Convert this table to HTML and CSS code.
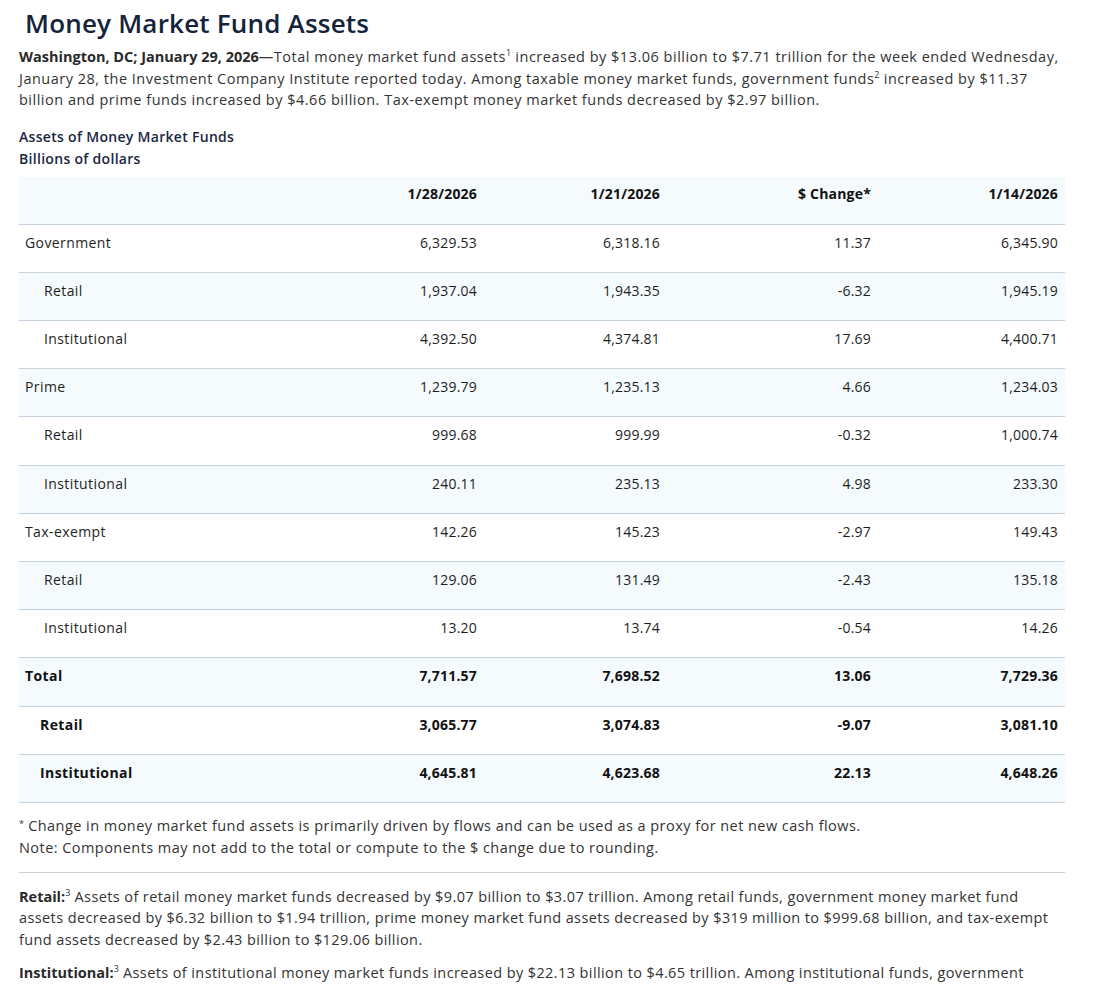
FILE: index.html
```html
<!DOCTYPE html>
<html lang="en">
<head>
<meta charset="utf-8">
<title>Money Market Fund Assets</title>
<link rel="stylesheet" href="styles.css">
</head>
<body>
<main class="page">
  <h1 class="title">Money Market Fund Assets</h1>
  <p class="lead"><strong>Washington, DC; January 29, 2026</strong>—Total money market fund assets<sup>1</sup> increased by $13.06 billion to $7.71 trillion for the week ended Wednesday, January 28, the Investment Company Institute reported today. Among taxable money market funds, government funds<sup>2</sup> increased by $11.37 billion and prime funds increased by $4.66 billion. Tax-exempt money market funds decreased by $2.97 billion.</p>

  <div class="caption">
    <div>Assets of Money Market Funds</div>
    <div>Billions of dollars</div>
  </div>

  <table class="data">
    <colgroup>
      <col>
      <col class="c1">
      <col class="c2">
      <col class="c3">
      <col class="c4">
    </colgroup>
    <thead>
      <tr><th></th><th>1/28/2026</th><th>1/21/2026</th><th>$ Change*</th><th>1/14/2026</th></tr>
    </thead>
    <tbody>
      <tr><td class="lbl">Government</td><td>6,329.53</td><td>6,318.16</td><td>11.37</td><td>6,345.90</td></tr>
      <tr><td class="lbl sub">Retail</td><td>1,937.04</td><td>1,943.35</td><td>-6.32</td><td>1,945.19</td></tr>
      <tr><td class="lbl sub">Institutional</td><td>4,392.50</td><td>4,374.81</td><td>17.69</td><td>4,400.71</td></tr>
      <tr><td class="lbl">Prime</td><td>1,239.79</td><td>1,235.13</td><td>4.66</td><td>1,234.03</td></tr>
      <tr><td class="lbl sub">Retail</td><td>999.68</td><td>999.99</td><td>-0.32</td><td>1,000.74</td></tr>
      <tr><td class="lbl sub">Institutional</td><td>240.11</td><td>235.13</td><td>4.98</td><td>233.30</td></tr>
      <tr><td class="lbl">Tax-exempt</td><td>142.26</td><td>145.23</td><td>-2.97</td><td>149.43</td></tr>
      <tr><td class="lbl sub">Retail</td><td>129.06</td><td>131.49</td><td>-2.43</td><td>135.18</td></tr>
      <tr><td class="lbl sub">Institutional</td><td>13.20</td><td>13.74</td><td>-0.54</td><td>14.26</td></tr>
      <tr class="bold"><td class="lbl">Total</td><td>7,711.57</td><td>7,698.52</td><td>13.06</td><td>7,729.36</td></tr>
      <tr class="bold"><td class="lbl subb">Retail</td><td>3,065.77</td><td>3,074.83</td><td>-9.07</td><td>3,081.10</td></tr>
      <tr class="bold"><td class="lbl subb">Institutional</td><td>4,645.81</td><td>4,623.68</td><td>22.13</td><td>4,648.26</td></tr>
    </tbody>
  </table>

  <div class="notes">
    <p><sup>*</sup> Change in money market fund assets is primarily driven by flows and can be used as a proxy for net new cash flows.</p>
    <p>Note: Components may not add to the total or compute to the $ change due to rounding.</p>
  </div>

  <hr class="rule">

  <p class="body"><strong>Retail:</strong><sup>3</sup> Assets of retail money market funds decreased by $9.07 billion to $3.07 trillion. Among retail funds, government money market fund assets decreased by $6.32 billion to $1.94 trillion, prime money market fund assets decreased by $319 million to $999.68 billion, and tax-exempt fund assets decreased by $2.43 billion to $129.06 billion.</p>
  <p class="body"><strong>Institutional:</strong><sup>3</sup> Assets of institutional money market funds increased by $22.13 billion to $4.65 trillion. Among institutional funds, government money market fund assets increased by $28.39 billion to $3.59 trillion, prime money market fund assets increased by $4.98 billion to $240.11 billion, and tax-exempt fund assets decreased by $0.54 billion to $13.20 billion.</p>
</main>
</body>
</html>
```

FILE: styles.css
```css
html, body {
  margin: 0;
  padding: 0;
  background: #ffffff;
}

body {
  font-family: "Open Sans", "Noto Sans", sans-serif;
  color: #333333;
  font-size: 14.5px;
}

.page {
  width: 1046px;
  padding: 0 0 0 19px;
}

.title {
  margin: 0;
  padding: 6px 0 0 6px;
  font-size: 26px;
  line-height: 34px;
  font-weight: 600;
  color: #14233c;
  letter-spacing: 0.2px;
}

.lead {
  margin: 6px 0 0;
  line-height: 21.5px;
  letter-spacing: 0.5px;
}

.lead strong, .body strong {
  font-weight: 700;
  color: #2a2a2a;
  letter-spacing: 0;
}

sup {
  font-size: 9px;
  line-height: 0;
  vertical-align: 6px;
  letter-spacing: 0;
}

.caption {
  margin-top: 15px;
  color: #1a2740;
  font-weight: 600;
  font-size: 14px;
  line-height: 22px;
  letter-spacing: 0.3px;
}

.data {
  width: 1046px;
  border-collapse: collapse;
  margin-top: 7px;
  color: #1e1e1e;
}

.data .c1 { width: 185px; }
.data .c2 { width: 183px; }
.data .c3 { width: 211px; }
.data .c4 { width: 187px; }

.data th,
.data td {
  text-align: right;
  padding: 6px 7px 20px;
  line-height: 21px;
  border-bottom: 1px solid #c6d3df;
  font-size: 14px;
  letter-spacing: 0.2px;
}

.data th {
  font-weight: 700;
  color: #111;
}

.data td {
  padding: 7px 7px 19px;
  line-height: 21.2px;
}

.data thead tr {
  background: #f5fafd;
}

.data tbody tr:nth-child(even) {
  background: #f5fafd;
}

.data td.lbl {
  text-align: left;
  padding-left: 6px;
  letter-spacing: 0.4px;
}

.data td.sub {
  padding-left: 25px;
}

.data td.subb {
  padding-left: 21px;
}

.data tr.bold td {
  font-weight: 700;
  color: #111;
}

.notes {
  margin-top: 12px;
  line-height: 22px;
  letter-spacing: 0.45px;
}

.notes p {
  margin: 0;
}

.notes sup {
  vertical-align: 4px;
}

.rule {
  border: 0;
  border-top: 1px solid #cfcfcf;
  margin: 13px 0 0;
}

.body {
  margin: 13px 0 0;
  line-height: 21.5px;
  letter-spacing: 0.4px;
}

.body + .body {
  margin-top: 12px;
}
```
